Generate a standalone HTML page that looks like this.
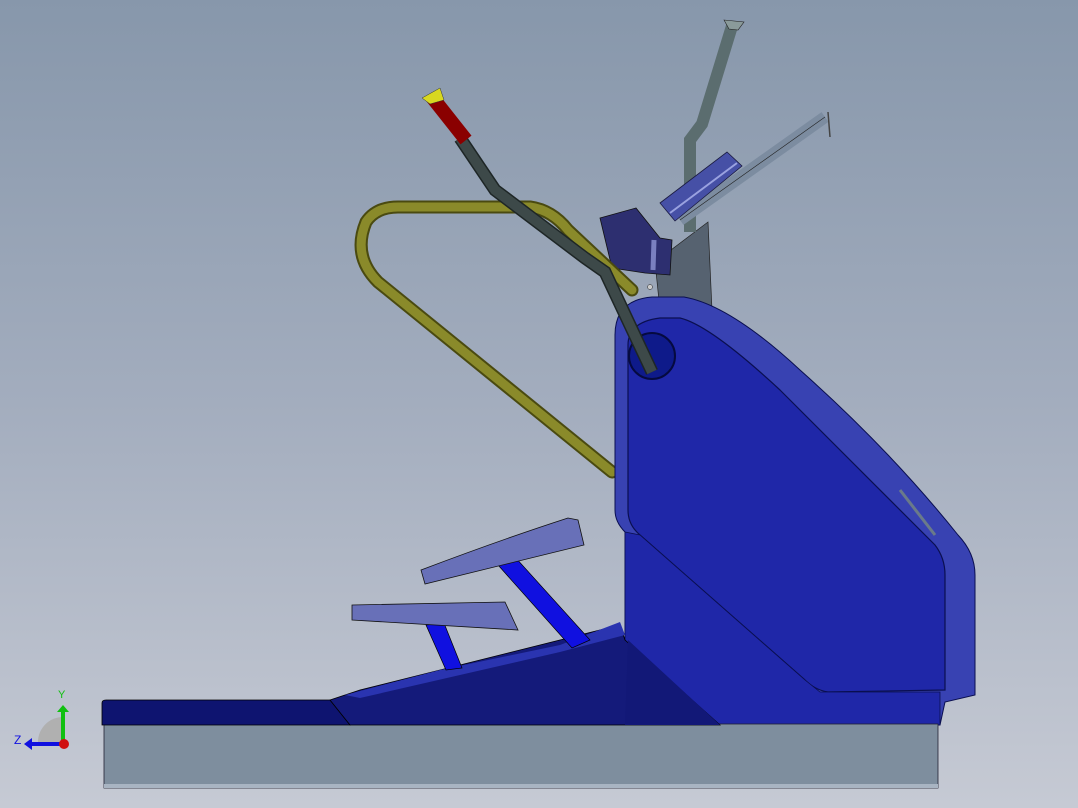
<!DOCTYPE html>
<html><head><style>html,body{margin:0;padding:0;width:1078px;height:808px;overflow:hidden}</style></head><body>
<svg width="1078" height="808" viewBox="0 0 1078 808" xmlns="http://www.w3.org/2000/svg">
<defs>
<linearGradient id="bg" x1="0" y1="0" x2="0" y2="1">
<stop offset="0" stop-color="#8797ab"/><stop offset="0.5" stop-color="#a3adbe"/><stop offset="1" stop-color="#c6cad4"/></linearGradient>
</defs>
<rect width="1078" height="808" fill="url(#bg)"/>
<!-- console mast -->
<polygon points="655,262 708,222 712,310 660,310" fill="#566270" stroke="#222" stroke-width="0.7"/>
<circle cx="650" cy="287" r="2.5" fill="#ccc" stroke="#222" stroke-width="0.5"/>
<path d="M690,232 L690,140 L702,124 L732,26" fill="none" stroke="#5b6d6f" stroke-width="12"/>
<polygon points="724,20 744,22 738,30 729,29" fill="#8a9a9a" stroke="#222" stroke-width="0.6"/>
<path d="M680,220 L825,117" stroke="#7c8ca0" stroke-width="12" fill="none"/>
<path d="M680,220 L825,117" stroke="#222" stroke-width="0.6" fill="none"/>
<line x1="828" y1="112" x2="830" y2="137" stroke="#444" stroke-width="1.5"/>
<polygon points="660,203 727,152 742,166 675,221" fill="#4650a6" stroke="#1a1a40" stroke-width="0.8"/>
<line x1="670" y1="213" x2="737" y2="163" stroke="#9aa2e0" stroke-width="2"/>
<polygon points="600,218 636,208 660,238 672,240 670,275 645,273 612,268" fill="#2d2f70" stroke="#111" stroke-width="0.8"/>
<line x1="654" y1="240" x2="653" y2="270" stroke="#7a80c0" stroke-width="5"/>
<!-- olive rail -->
<path d="M612,472 L378,282 Q352,256 366,222 Q376,207 398,207 L530,207 Q552,210 568,230 L632,290" fill="none" stroke="#4a4a10" stroke-width="13" stroke-linecap="round"/>
<path d="M612,472 L378,282 Q352,256 366,222 Q376,207 398,207 L530,207 Q552,210 568,230 L632,290" fill="none" stroke="#8a8a2a" stroke-width="9" stroke-linecap="round"/>
<!-- housing -->
<path d="M615,335 Q615,300 652,297 L684,297 Q730,305 800,370 Q890,450 958,535 Q975,553 975,575 L975,695 L945,702 L940,725 L625,725 L625,532 Q615,522 615,510 Z" fill="#3842b2" stroke="#0a0f50" stroke-width="1"/>
<path d="M628,345 Q628,322 660,318 L680,318 Q710,325 780,390 L935,545 Q945,558 945,575 L945,690 L828,692 Q815,690 805,680 L640,535 Q628,525 628,510 Z" fill="#1f27a8" stroke="#0a0f50" stroke-width="1.2"/>
<polygon points="625,532 640,535 805,680 820,692 940,692 940,725 625,725" fill="#1f27a8" stroke="#0a0f50" stroke-width="0.8"/>
<circle cx="652" cy="356" r="23" fill="#0e1a8a" stroke="#050a40" stroke-width="2"/>
<line x1="900" y1="490" x2="935" y2="535" stroke="#6a7a8a" stroke-width="3"/>
<!-- base -->
<rect x="104" y="724" width="834" height="64" fill="#7e8e9e" stroke="#223" stroke-width="0.8"/>
<rect x="104" y="784" width="834" height="4" fill="#a8b4c2"/>
<path d="M102,703 Q102,700 106,700 L330,700 L350,725 L102,725 Z" fill="#0e1470" stroke="#000" stroke-width="0.8"/>
<polygon points="330,700 360,690 620,625 625,640 720,725 350,725" fill="#141a7a" stroke="#000" stroke-width="0.8"/>
<polygon points="345,695 440,670 560,645 620,622 625,635 560,652 360,698" fill="#2a34b0"/>
<polygon points="628,640 720,725 625,725" fill="#121877"/>
<!-- struts -->
<polygon points="498,565 515,557 590,640 572,648" fill="#1010e0" stroke="#000" stroke-width="0.7"/>
<polygon points="426,625 444,623 462,668 446,670" fill="#1010e0" stroke="#000" stroke-width="0.7"/>
<!-- pedals -->
<path d="M421,570 Q500,540 568,518 L578,520 L584,545 L425,584 Z" fill="#6870b8" stroke="#111" stroke-width="0.8"/>
<path d="M352,605 L505,602 L518,630 L352,620 Z" fill="#6870b8" stroke="#111" stroke-width="0.8"/>
<!-- dark handle -->
<path d="M460,138 L495,190 L585,258 L605,272 L652,372" fill="none" stroke="#1e2626" stroke-width="13"/>
<path d="M460,138 L495,190 L585,258 L605,272 L652,372" fill="none" stroke="#3d4949" stroke-width="10"/>
<path d="M432,97 L466,140" stroke="#8a0000" stroke-width="14"/>
<polygon points="422,98 440,88 444,100 430,104" fill="#d8d820" stroke="#333" stroke-width="0.5"/>
<!-- axis triad -->
<path d="M38,742 A25,25 0 0 1 63,717 L63,742 Z" fill="#b0b0b0"/>
<line x1="63" y1="742" x2="63" y2="712" stroke="#10c010" stroke-width="4"/>
<polygon points="57,712 69,712 63,705" fill="#10c010"/>
<line x1="63" y1="744" x2="32" y2="744" stroke="#1010e0" stroke-width="4"/>
<polygon points="32,738 32,750 24,744" fill="#1010e0"/>
<circle cx="64" cy="744" r="5" fill="#d01010"/>
<text x="58" y="698" font-family="Liberation Sans, sans-serif" font-size="11" fill="#10c010">Y</text>
<text x="14" y="744" font-family="Liberation Sans, sans-serif" font-size="12" fill="#1010e0">Z</text>
</svg>
</body></html>
